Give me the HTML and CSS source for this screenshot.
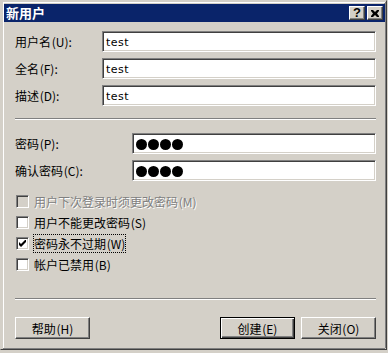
FILE: index.html
```html
<!DOCTYPE html>
<html lang="zh-CN">

<head>
    <meta charset="UTF-8">
    <title>新用户</title>
    <link rel="stylesheet" href="styles.css">
</head>

<body>
    <div class="window">
        <div class="titlebar">
            <span class="title">新用户</span>
            <div class="caption-buttons">
                <div class="cap-btn help">?</div>
                <div class="cap-btn close">
                    <svg width="8" height="7" viewBox="0 0 8 7">
                        <path d="M0 0h2l2 2 2-2h2v1l-2 2.5 2 2.5v1h-2l-2-2-2 2h-2v-1l2-2.5-2-2.5z" fill="#000"/>
                    </svg>
                </div>
            </div>
        </div>

        <div class="content">
            <div class="field-grid names">
                <label>用户名 (U):</label>
                <div class="textbox">test</div>
                <label>全名 (F):</label>
                <div class="textbox">test</div>
                <label>描述 (D):</label>
                <div class="textbox">test</div>
            </div>

            <div class="separator sep-top"></div>

            <div class="field-grid passwords">
                <label>密码 (P):</label>
                <div class="textbox dots"><i></i><i></i><i></i><i></i></div>
                <label>确认密码 (C):</label>
                <div class="textbox dots"><i></i><i></i><i></i><i></i></div>
            </div>

            <div class="checks">
                <div class="check disabled"><span class="box"></span><span class="check-label">用户下次登录时须更改密码 (M)</span></div>
                <div class="check"><span class="box"></span><span class="check-label">用户不能更改密码 (S)</span></div>
                <div class="check"><span class="box">
                    <svg width="7" height="7" viewBox="0 0 7 7"><path d="M0 2v3l2 2 5-5v-3l-5 5z" fill="#000"/></svg>
                </span><span class="check-label focused">密码永不过期 (W)</span></div>
                <div class="check"><span class="box"></span><span class="check-label">帐户已禁用 (B)</span></div>
            </div>

            <div class="separator sep-bottom"></div>

            <div class="buttons">
                <div class="btn">帮助 (H)</div>
                <div class="btn default push">创建 (E)</div>
                <div class="btn">关闭 (O)</div>
            </div>
        </div>
    </div>
</body>

</html>
```

FILE: styles.css
```css
body {
    margin: 0;
    background-color: #d4d0c8;
    font-family: "Noto Sans CJK SC", sans-serif;
    font-size: 12px;
    color: #000;
}

.window {
    width: 387px;
    height: 350px;
    box-sizing: border-box;
    border: 1px solid;
    border-color: #d4d0c8 #404040 #404040 #d4d0c8;
    display: flex;
    flex-direction: column;
}

.titlebar {
    margin: 1px 1px 0 2px;
    border-top: 1px solid #fff;
    border-left: 1px solid #fff;
    padding-top: 1px;
    height: 18px;
    display: flex;
    align-items: center;
    justify-content: space-between;
    background-color: #0a246a;
    background-clip: content-box;
    box-shadow: 1px 0 0 #808080;
    color: #fff;
}

.title {
    font-weight: bold;
    font-size: 13px;
    padding-left: 2px;
    line-height: 18px;
}

.caption-buttons {
    display: flex;
    gap: 2px;
    padding-right: 2px;
}

.cap-btn {
    width: 16px;
    height: 14px;
    box-sizing: border-box;
    background-color: #d4d0c8;
    border: 1px solid;
    border-color: #fff #404040 #404040 #fff;
    box-shadow: inset -1px -1px #808080;
    display: flex;
    align-items: center;
    justify-content: center;
    color: #000;
}

.help {
    font-family: "Liberation Sans", sans-serif;
    font-weight: bold;
    font-size: 13px;
    line-height: 12px;
}

.content {
    flex: 1;
    margin: 0 1px 1px 2px;
    border-left: 1px solid #fff;
    box-shadow: 1px 0 0 #808080, 0 1px 0 #808080;
    padding: 9px 9px 0 11px;
}

.field-grid {
    display: grid;
    row-gap: 6px;
    align-items: center;
}

.field-grid label {
    word-spacing: -2px;
}

.names {
    grid-template-columns: 87px 1fr;
}

.passwords {
    grid-template-columns: 117px 1fr;
}

.textbox {
    height: 21px;
    box-sizing: border-box;
    background-color: #fff;
    border: 1px solid;
    border-color: #808080 #fff #fff #808080;
    box-shadow: inset 1px 1px #404040, inset -1px -1px #d4d0c8;
    padding: 1px 3px 0;
    display: flex;
    align-items: center;
    font-family: "DejaVu Sans", sans-serif;
    font-size: 11px;
    letter-spacing: 0.5px;
}

.dots {
    gap: 1px;
    padding-left: 3px;
}

.dots i {
    width: 11px;
    height: 11px;
    border-radius: 50%;
    background-color: #000;
}

.separator {
    border-top: 1px solid #808080;
    border-bottom: 1px solid #fff;
    height: 0;
}

.sep-top {
    margin: 12px 0 13px;
}

.checks {
    margin-top: 10px;
    display: flex;
    flex-direction: column;
}

.check {
    height: 21px;
    display: flex;
    align-items: center;
    gap: 5px;
    padding-left: 1px;
    word-spacing: -2px;
}

.box {
    width: 13px;
    height: 13px;
    box-sizing: border-box;
    background-color: #fff;
    border: 1px solid;
    border-color: #808080 #fff #fff #808080;
    box-shadow: inset 1px 1px #404040, inset -1px -1px #d4d0c8;
    display: flex;
    align-items: center;
    justify-content: center;
}

.disabled .box {
    background-color: #d4d0c8;
}

.disabled .check-label {
    color: #808080;
    text-shadow: 1px 1px #fff;
}

.focused {
    outline: 1px dotted #000;
    outline-offset: 0;
}

.sep-bottom {
    margin: 23px 0 17px;
}

.buttons {
    display: flex;
    gap: 6px;
}

.btn {
    width: 75px;
    height: 22px;
    box-sizing: border-box;
    border: 1px solid;
    border-color: #fff #404040 #404040 #fff;
    box-shadow: inset -1px -1px #808080, inset 1px 1px #d4d0c8;
    display: flex;
    align-items: center;
    justify-content: center;
    word-spacing: -2px;
}

.btn.default {
    border-color: #000;
    box-shadow: inset 1px 1px #fff, inset -1px -1px #404040, inset -2px -2px #808080;
}

.push {
    margin-left: auto;
}
```
